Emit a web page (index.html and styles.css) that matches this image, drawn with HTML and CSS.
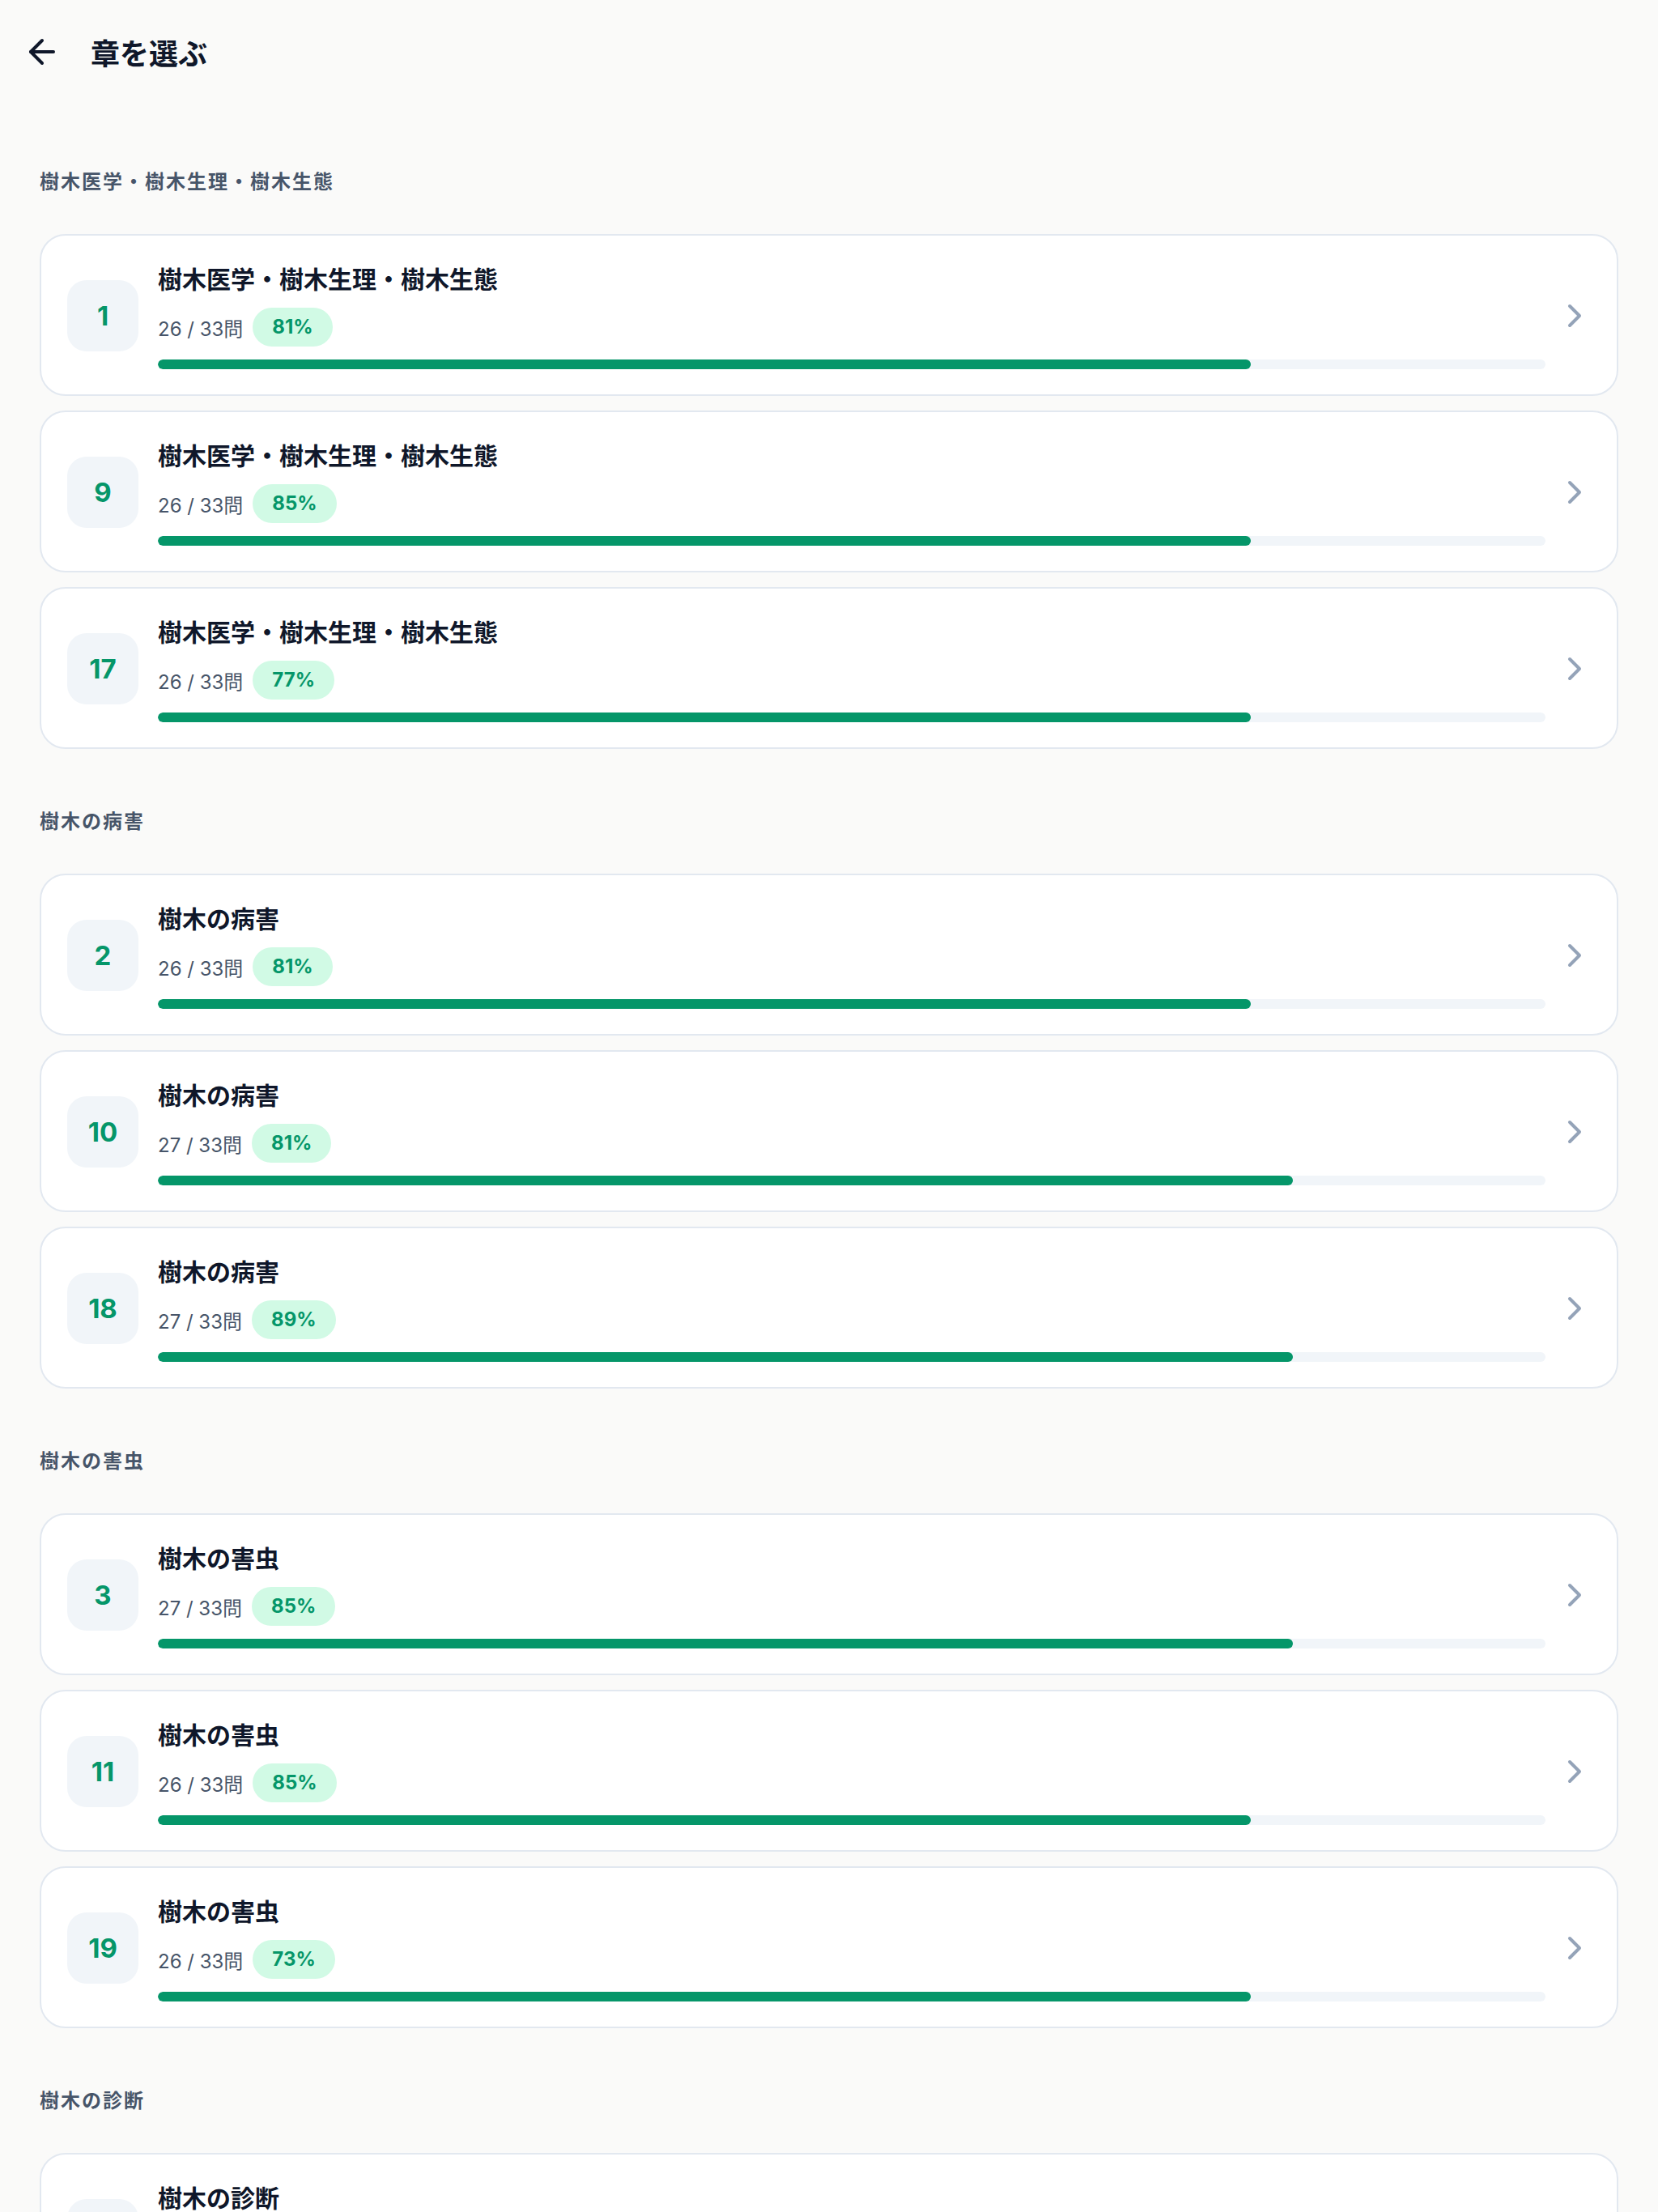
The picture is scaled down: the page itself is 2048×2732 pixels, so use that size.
FILE: index.html
```html
<!DOCTYPE html>
<html lang="ja">
<head>
<meta charset="utf-8">
<title>章を選ぶ</title>
<link rel="stylesheet" href="styles.css">
</head>
<body>
<header class="topbar">
  <button class="back" aria-label="戻る">
    <svg viewBox="0 0 24 24" width="48" height="48" fill="none" stroke="currentColor" stroke-width="2" stroke-linecap="round" stroke-linejoin="round"><path d="M19 12H5"/><path d="M12 19l-7-7 7-7"/></svg>
  </button>
  <h1 class="page-title">章を選ぶ</h1>
</header>

<main class="content">
  <section class="group">
    <h2 class="group-label">樹木医学・樹木生理・樹木生態</h2>
    <div class="cards">
      <a class="card" href="#">
        <div class="num">1</div>
        <div class="info">
          <div class="title">樹木医学・樹木生理・樹木生態</div>
          <div class="meta"><span class="count">26 / 33問</span><span class="badge">81%</span></div>
          <div class="track"><div class="fill" style="width:78.79%"></div></div>
        </div>
        <svg class="chev" viewBox="0 0 24 24" width="48" height="48" fill="none" stroke="currentColor" stroke-width="2" stroke-linecap="round" stroke-linejoin="round"><path d="M9 18l6-6-6-6"/></svg>
      </a>
      <a class="card" href="#">
        <div class="num">9</div>
        <div class="info">
          <div class="title">樹木医学・樹木生理・樹木生態</div>
          <div class="meta"><span class="count">26 / 33問</span><span class="badge">85%</span></div>
          <div class="track"><div class="fill" style="width:78.79%"></div></div>
        </div>
        <svg class="chev" viewBox="0 0 24 24" width="48" height="48" fill="none" stroke="currentColor" stroke-width="2" stroke-linecap="round" stroke-linejoin="round"><path d="M9 18l6-6-6-6"/></svg>
      </a>
      <a class="card" href="#">
        <div class="num">17</div>
        <div class="info">
          <div class="title">樹木医学・樹木生理・樹木生態</div>
          <div class="meta"><span class="count">26 / 33問</span><span class="badge">77%</span></div>
          <div class="track"><div class="fill" style="width:78.79%"></div></div>
        </div>
        <svg class="chev" viewBox="0 0 24 24" width="48" height="48" fill="none" stroke="currentColor" stroke-width="2" stroke-linecap="round" stroke-linejoin="round"><path d="M9 18l6-6-6-6"/></svg>
      </a>
    </div>
  </section>

  <section class="group">
    <h2 class="group-label">樹木の病害</h2>
    <div class="cards">
      <a class="card" href="#">
        <div class="num">2</div>
        <div class="info">
          <div class="title">樹木の病害</div>
          <div class="meta"><span class="count">26 / 33問</span><span class="badge">81%</span></div>
          <div class="track"><div class="fill" style="width:78.79%"></div></div>
        </div>
        <svg class="chev" viewBox="0 0 24 24" width="48" height="48" fill="none" stroke="currentColor" stroke-width="2" stroke-linecap="round" stroke-linejoin="round"><path d="M9 18l6-6-6-6"/></svg>
      </a>
      <a class="card" href="#">
        <div class="num">10</div>
        <div class="info">
          <div class="title">樹木の病害</div>
          <div class="meta"><span class="count">27 / 33問</span><span class="badge">81%</span></div>
          <div class="track"><div class="fill" style="width:81.82%"></div></div>
        </div>
        <svg class="chev" viewBox="0 0 24 24" width="48" height="48" fill="none" stroke="currentColor" stroke-width="2" stroke-linecap="round" stroke-linejoin="round"><path d="M9 18l6-6-6-6"/></svg>
      </a>
      <a class="card" href="#">
        <div class="num">18</div>
        <div class="info">
          <div class="title">樹木の病害</div>
          <div class="meta"><span class="count">27 / 33問</span><span class="badge">89%</span></div>
          <div class="track"><div class="fill" style="width:81.82%"></div></div>
        </div>
        <svg class="chev" viewBox="0 0 24 24" width="48" height="48" fill="none" stroke="currentColor" stroke-width="2" stroke-linecap="round" stroke-linejoin="round"><path d="M9 18l6-6-6-6"/></svg>
      </a>
    </div>
  </section>

  <section class="group">
    <h2 class="group-label">樹木の害虫</h2>
    <div class="cards">
      <a class="card" href="#">
        <div class="num">3</div>
        <div class="info">
          <div class="title">樹木の害虫</div>
          <div class="meta"><span class="count">27 / 33問</span><span class="badge">85%</span></div>
          <div class="track"><div class="fill" style="width:81.82%"></div></div>
        </div>
        <svg class="chev" viewBox="0 0 24 24" width="48" height="48" fill="none" stroke="currentColor" stroke-width="2" stroke-linecap="round" stroke-linejoin="round"><path d="M9 18l6-6-6-6"/></svg>
      </a>
      <a class="card" href="#">
        <div class="num">11</div>
        <div class="info">
          <div class="title">樹木の害虫</div>
          <div class="meta"><span class="count">26 / 33問</span><span class="badge">85%</span></div>
          <div class="track"><div class="fill" style="width:78.79%"></div></div>
        </div>
        <svg class="chev" viewBox="0 0 24 24" width="48" height="48" fill="none" stroke="currentColor" stroke-width="2" stroke-linecap="round" stroke-linejoin="round"><path d="M9 18l6-6-6-6"/></svg>
      </a>
      <a class="card" href="#">
        <div class="num">19</div>
        <div class="info">
          <div class="title">樹木の害虫</div>
          <div class="meta"><span class="count">26 / 33問</span><span class="badge">73%</span></div>
          <div class="track"><div class="fill" style="width:78.79%"></div></div>
        </div>
        <svg class="chev" viewBox="0 0 24 24" width="48" height="48" fill="none" stroke="currentColor" stroke-width="2" stroke-linecap="round" stroke-linejoin="round"><path d="M9 18l6-6-6-6"/></svg>
      </a>
    </div>
  </section>

  <section class="group">
    <h2 class="group-label">樹木の診断</h2>
    <div class="cards">
      <a class="card" href="#">
        <div class="num">4</div>
        <div class="info">
          <div class="title">樹木の診断</div>
          <div class="meta"><span class="count">26 / 33問</span><span class="badge">79%</span></div>
          <div class="track"><div class="fill" style="width:78.79%"></div></div>
        </div>
        <svg class="chev" viewBox="0 0 24 24" width="48" height="48" fill="none" stroke="currentColor" stroke-width="2" stroke-linecap="round" stroke-linejoin="round"><path d="M9 18l6-6-6-6"/></svg>
      </a>
    </div>
  </section>
</main>
</body>
</html>
```

FILE: styles.css
```css
* { box-sizing: border-box; }

html, body {
  margin: 0;
  padding: 0;
  background: #fafaf9;
}

body {
  font-family: "Inter", "Noto Sans CJK JP", sans-serif;
  color: #0f172a;
}

.topbar {
  height: 128px;
  display: flex;
  align-items: center;
  gap: 36px;
  padding: 0 28px;
}

.back {
  width: 48px;
  height: 48px;
  padding: 0;
  border: 0;
  background: none;
  color: #0f172a;
  display: flex;
  align-items: center;
  justify-content: center;
  cursor: pointer;
}

.page-title {
  margin: 0;
  font-family: "Noto Sans CJK JP", sans-serif;
  font-size: 36px;
  line-height: 48px;
  font-weight: 700;
  color: #0f172a;
}

.content {
  padding: 77px 49px 80px;
}

.group + .group {
  margin-top: 70px;
}

.group-label {
  margin: 0 0 48px;
  font-family: "Noto Sans CJK JP", sans-serif;
  font-size: 24px;
  line-height: 36px;
  font-weight: 700;
  letter-spacing: 2px;
  color: #475569;
}

.cards {
  display: flex;
  flex-direction: column;
  gap: 18px;
}

.card {
  display: flex;
  align-items: center;
  gap: 24px;
  padding: 32px 28px 31px 32px;
  background: #ffffff;
  border: 2px solid #e2e8f0;
  border-radius: 32px;
  text-decoration: none;
  color: inherit;
}

.num {
  flex: none;
  width: 88px;
  height: 88px;
  border-radius: 24px;
  background: #f1f5f9;
  color: #059669;
  font-family: "Inter", sans-serif;
  font-size: 33px;
  font-weight: 700;
  display: flex;
  align-items: center;
  justify-content: center;
}

.info {
  flex: 1;
  min-width: 0;
  display: flex;
  flex-direction: column;
  gap: 16px;
}

.title {
  font-family: "Noto Sans CJK JP", sans-serif;
  font-size: 30px;
  line-height: 41px;
  font-weight: 700;
  color: #0f172a;
}

.meta {
  display: flex;
  align-items: center;
  gap: 12px;
  height: 48px;
}

.count {
  font-family: "Inter", "Noto Sans CJK JP", sans-serif;
  font-size: 24px;
  color: #475569;
}

.badge {
  height: 48px;
  line-height: 48px;
  padding: 0 24px;
  border-radius: 24px;
  background: #d1fae5;
  color: #059669;
  font-family: "Inter", sans-serif;
  font-size: 24px;
  font-weight: 700;
}

.track {
  height: 12px;
  border-radius: 6px;
  background: #f1f5f9;
  overflow: hidden;
}

.fill {
  height: 100%;
  border-radius: 6px;
  background: #059669;
}

.chev {
  flex: none;
  color: #94a3b8;
  margin-left: -12px;
}
```
